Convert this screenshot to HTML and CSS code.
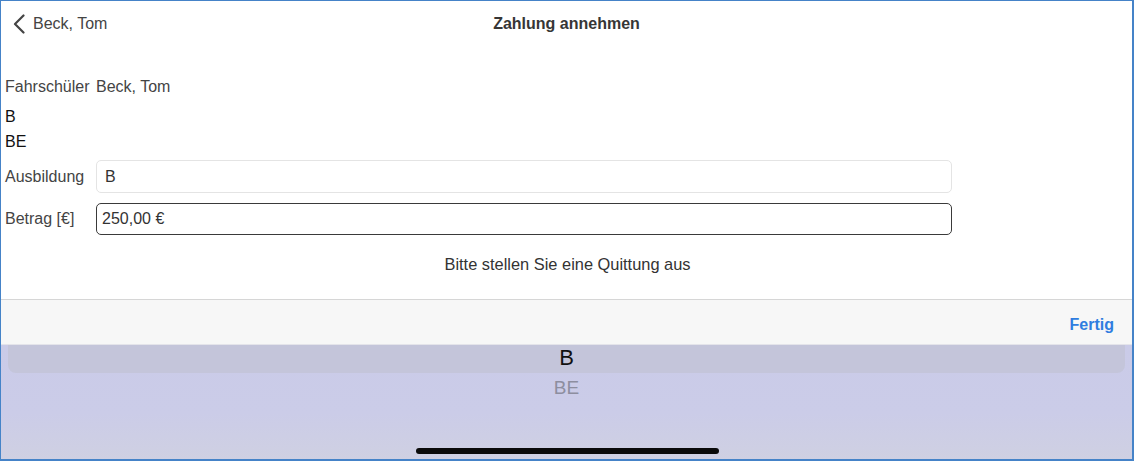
FILE: index.html
```html
<!DOCTYPE html>
<html lang="de">
<head>
<meta charset="utf-8">
<title>Zahlung annehmen</title>
<link rel="stylesheet" href="styles.css">
</head>
<body>
<div class="screen">
  <header class="nav">
    <div class="nav-back">
      <svg class="chevron" width="14" height="20" viewBox="0 0 14 20" aria-hidden="true">
        <polyline points="11.5,1.5 3,10 11.5,18.5" fill="none" stroke="#444" stroke-width="2.2" stroke-linecap="round" stroke-linejoin="round"/>
      </svg>
      <span>Beck, Tom</span>
    </div>
    <div class="nav-title">Zahlung annehmen</div>
    <div class="nav-right"></div>
  </header>

  <main class="content">
    <div class="row row-student">
      <span class="label">Fahrschüler</span>
      <span class="value">Beck, Tom</span>
    </div>
    <div class="line">B</div>
    <div class="line">BE</div>

    <div class="row row-field">
      <span class="label">Ausbildung</span>
      <div class="field field-light">B</div>
    </div>
    <div class="row row-field">
      <span class="label">Betrag [€]</span>
      <div class="field field-dark">250,00 €</div>
    </div>

    <p class="hint">Bitte stellen Sie eine Quittung aus</p>
  </main>

  <div class="toolbar">
    <span class="done">Fertig</span>
  </div>

  <div class="picker">
    <div class="band">B</div>
    <div class="option">BE</div>
    <div class="home"></div>
  </div>
</div>
</body>
</html>
```

FILE: styles.css
```css
* { box-sizing: border-box; }

html, body {
  margin: 0;
  padding: 0;
  background: #ffffff;
}

body {
  font-family: "Liberation Sans", Arial, sans-serif;
}

.screen {
  width: 1134px;
  height: 461px;
  border-style: solid;
  border-color: #4583c8;
  border-width: 1px 2px 2px 1px;
  display: flex;
  flex-direction: column;
  background: #ffffff;
  overflow: hidden;
}

.nav {
  height: 45px;
  flex: 0 0 45px;
  display: grid;
  grid-template-columns: 1fr auto 1fr;
  align-items: center;
}

.nav-back {
  display: flex;
  align-items: center;
  gap: 7px;
  padding-left: 11px;
  font-size: 16px;
  color: #444444;
}

.chevron { display: block; }

.nav-title {
  font-size: 16px;
  font-weight: bold;
  color: #363636;
}

.content {
  flex: 1 1 auto;
  padding-left: 4px;
  padding-top: 31px;
}

.row {
  display: grid;
  grid-template-columns: 91px 856px;
  align-items: center;
  font-size: 16px;
  color: #444444;
}

.row-student {
  line-height: 20px;
  margin-bottom: 7px;
}

.line {
  font-size: 16px;
  line-height: 25px;
  color: #111111;
}

.row-field {
  margin-top: 10px;
}

.line + .row-field { margin-top: 6px; }

.field {
  height: 33px;
  border-radius: 5px;
  padding: 0 7px;
  display: flex;
  align-items: center;
  font-size: 16px;
  color: #333333;
}

.field-light {
  border: 1px solid #e4e4e4;
  padding-left: 8px;
}

.field-dark {
  border: 1px solid #3a3a3a;
  height: 32px;
  padding-left: 5px;
}

.hint {
  margin: 19px 0 0;
  line-height: 20px;
  font-size: 16.4px;
  color: #333333;
  text-align: center;
  padding-right: 2px;
}

.toolbar {
  flex: 0 0 46px;
  height: 46px;
  border-top: 1px solid #d6d6d6;
  border-bottom: 1px solid #e4e4ea;
  background: #f7f7f7;
  display: flex;
  align-items: center;
  justify-content: flex-end;
  padding-right: 18px;
  padding-top: 5px;
}

.done {
  font-size: 16px;
  font-weight: bold;
  color: #2f7de0;
}

.picker {
  flex: 0 0 114px;
  height: 114px;
  position: relative;
  background: linear-gradient(180deg, #cacbe8 0%, #cbcce8 60%, #cfd0e2 100%);
}

.band {
  margin: 0 7px;
  height: 28px;
  background: #c4c5da;
  border-radius: 0 0 8px 8px;
  text-align: center;
  font-size: 22px;
  line-height: 26px;
  color: #111111;
}

.option {
  text-align: center;
  font-size: 19px;
  line-height: 30px;
  color: #8d8e9f;
}

.home {
  position: absolute;
  left: 415px;
  bottom: 5px;
  width: 303px;
  height: 6px;
  border-radius: 3px;
  background: #0a0a0a;
}
```
